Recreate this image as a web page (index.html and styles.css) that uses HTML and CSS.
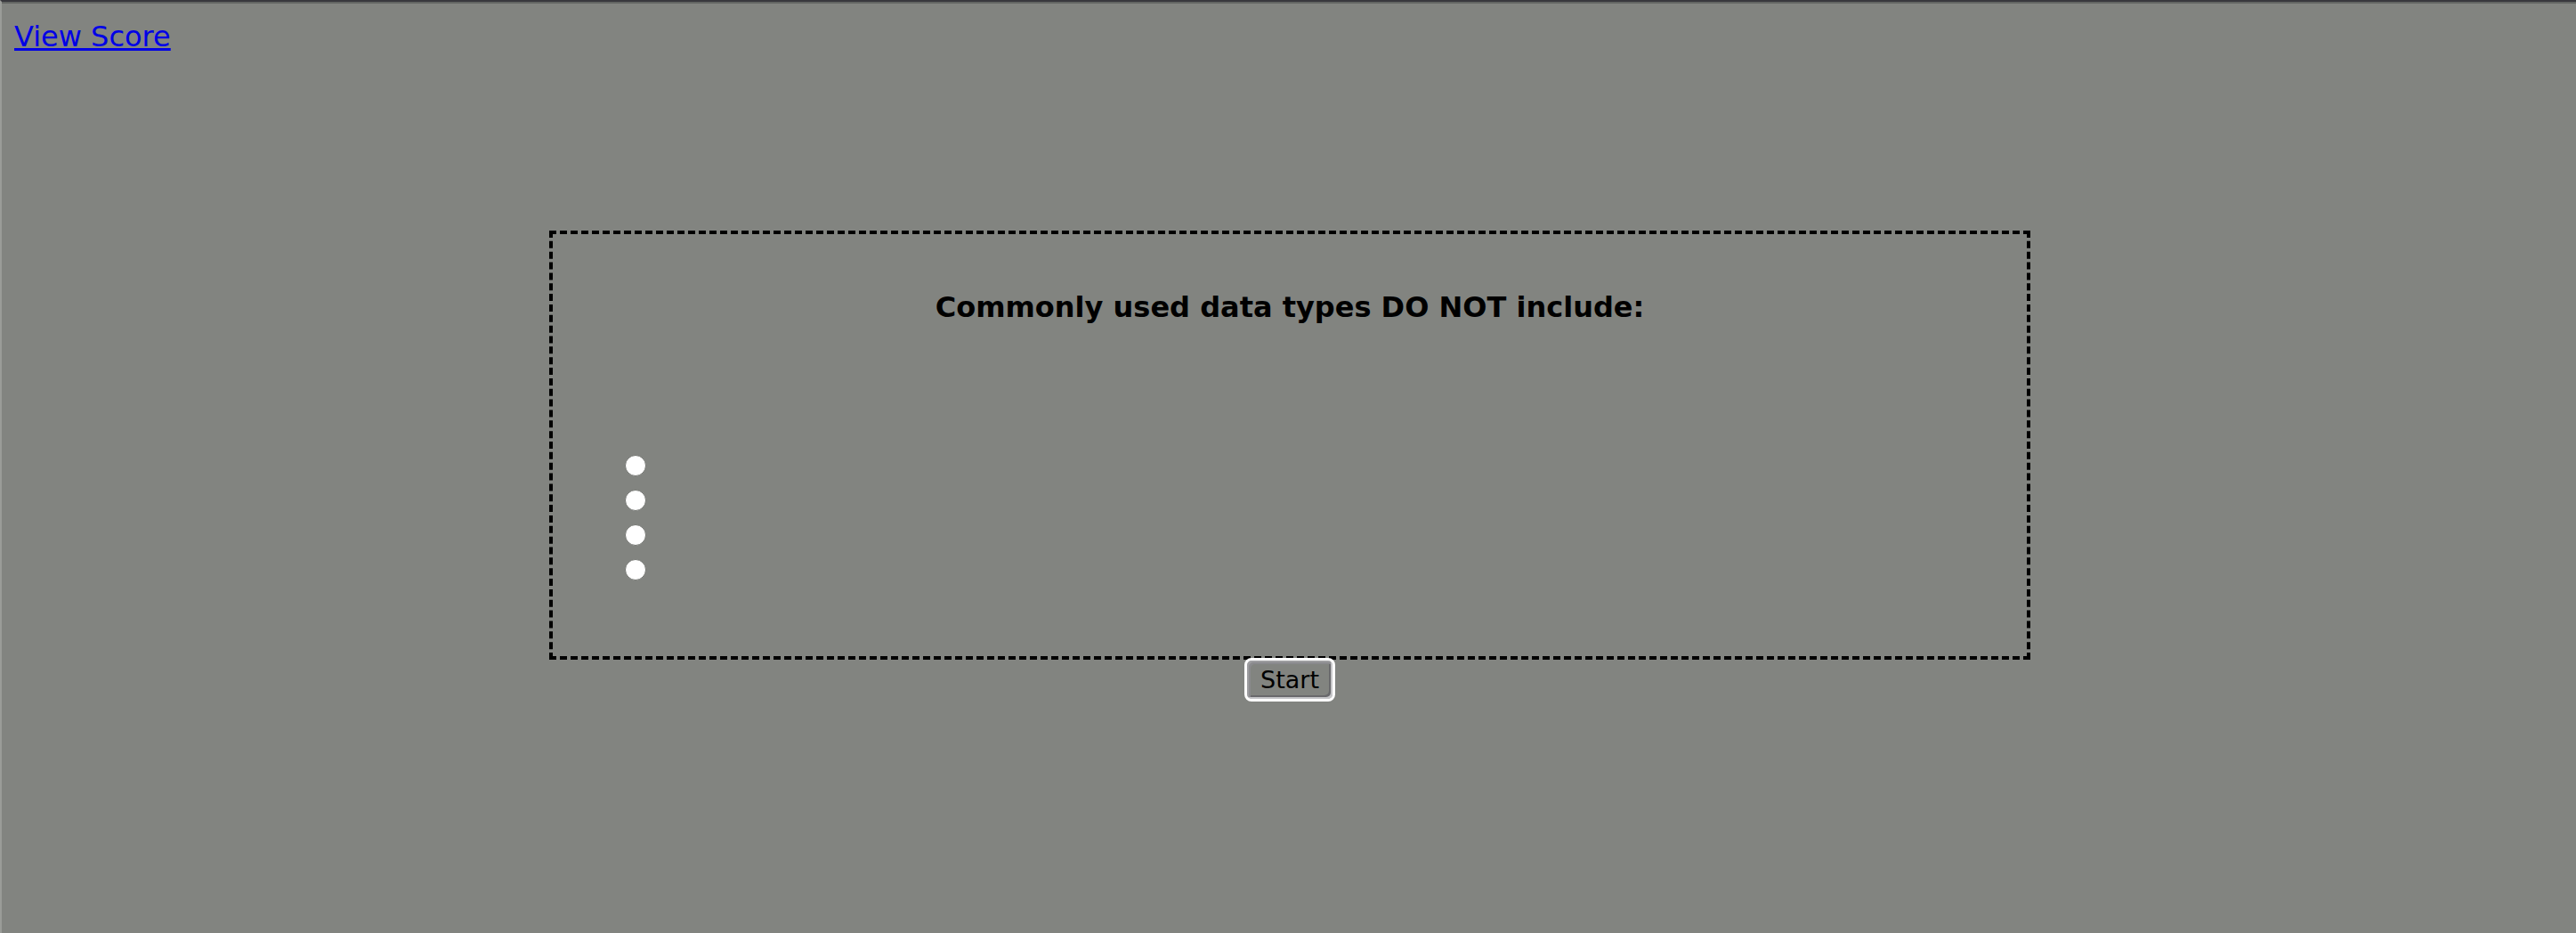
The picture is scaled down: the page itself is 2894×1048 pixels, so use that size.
FILE: index.html
```html
<!DOCTYPE html>
<html lang="en">
<head>
  <meta charset="utf-8">
  <title>Quiz</title>
  <link rel="stylesheet" href="styles.css">
</head>
<body>
  <header class="topbar">
    <a class="score-link" href="#score">View Score</a>
  </header>
  <main class="quiz">
    <form class="question">
      <h1 class="question-title" id="question-title">Commonly used data types DO NOT include:</h1>
      <div class="answers" role="radiogroup" aria-labelledby="question-title">
        <label class="answer"><input class="radio" type="radio" name="answer" aria-label="Answer 1"></label>
        <label class="answer"><input class="radio" type="radio" name="answer" aria-label="Answer 2"></label>
        <label class="answer"><input class="radio" type="radio" name="answer" aria-label="Answer 3"></label>
        <label class="answer"><input class="radio" type="radio" name="answer" aria-label="Answer 4"></label>
      </div>
    </form>
    <button class="start" type="button">Start</button>
  </main>
</body>
</html>
```

FILE: styles.css
```css
* {
  box-sizing: border-box;
}

body {
  margin: 0;
  min-height: 100vh;
  border-top: 2px solid #38383d;
  border-left: 2px solid #9a9c98;
  background: #828480;
  box-shadow: inset 0 2px #636563;
  color: #000;
  font-family: Verdana, "DejaVu Sans", sans-serif;
  font-size: 32px;
  line-height: 40px;
}

.topbar {
  padding: 19px 14px;
}

.score-link {
  color: #0000e6;
  text-decoration-thickness: 3px;
}

.quiz {
  display: flex;
  flex-direction: column;
  align-items: center;
  padding-top: 179px;
  padding-left: 2px;
}

.question {
  width: 57.6%;
  padding: 62px 81px 78px;
  border: 4px dashed #000;
}

.question-title {
  margin: 0 0 138px;
  font-size: 32px;
  font-weight: bold;
  line-height: 40px;
  text-align: center;
}

.answers {
  display: grid;
  justify-content: start;
}

.answer {
  display: flex;
  align-items: center;
  height: 39px;
}

.radio {
  appearance: none;
  width: 24px;
  height: 24px;
  margin: 0;
  border: 1px solid #747672;
  border-radius: 50%;
  background: #fff;
}

.radio:checked {
  border: 7px solid #0000e6;
}

.start {
  margin-top: -2px;
  padding: 5px 15px;
  border: 3px solid #fff;
  border-radius: 8px;
  background: #828480;
  box-shadow: inset 2px 2px #9d9da0, inset -2px -2px #c5c5c8, inset 4px 4px #8a8a8d, inset -4px -4px #69696c;
  color: #000;
  font-family: inherit;
  font-size: 27px;
  line-height: 33px;
}
```
